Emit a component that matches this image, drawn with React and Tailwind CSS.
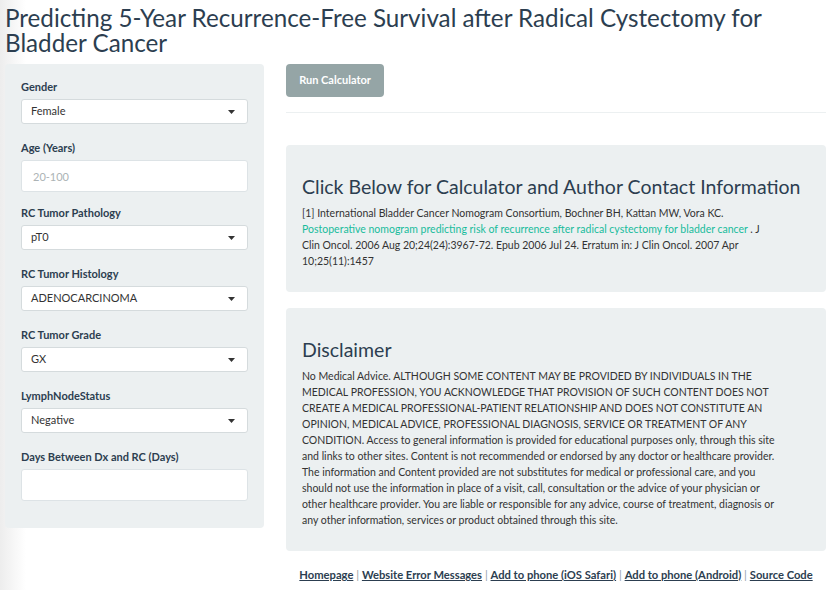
import { useState } from 'react'

const labelCls = 'block text-[11px] font-bold leading-4 text-[#2c3e50] mb-1'

function Caret() {
  return (
    <svg width="7" height="4" viewBox="0 0 7 4" className="shrink-0">
      <path d="M0 0h7L3.5 4z" fill="#333" />
    </svg>
  )
}

function SelectBox({ label, value, className = '' }) {
  return (
    <div className={className}>
      <label className={labelCls}>{label}</label>
      <div className="flex items-center justify-between h-[25px] bg-white border border-[#d5dbdd] rounded-[3px] pl-[9px] pr-[12px] text-[11px] text-[#333]">
        <span>{value}</span>
        <Caret />
      </div>
    </div>
  )
}

function TextBox({ label, placeholder, className = '' }) {
  const [val, setVal] = useState('')
  return (
    <div className={className}>
      <label className={labelCls}>{label}</label>
      <input
        className="block w-full h-[32px] bg-white border border-[#dde3e6] rounded-[3px] px-[11px] text-[11px] text-[#333] placeholder:text-[#acb3b5] outline-none"
        placeholder={placeholder}
        value={val}
        onChange={e => setVal(e.target.value)}
      />
    </div>
  )
}

export default function App() {
  return (
    <div className="min-h-[590px] px-[5px] bg-[linear-gradient(to_right,#ededed,#ffffff_26px)] font-['Lato','Open_Sans',sans-serif]">
      <h1 className="pt-[5px] pb-[9px] text-[24.2px] leading-[25px] text-[#2c3e50]">
        Predicting 5-Year Recurrence-Free Survival after Radical Cystectomy for Bladder Cancer
      </h1>

      <div className="flex gap-[22px] items-start">
        {/* sidebar inputs */}
        <div className="w-[259px] shrink-0 bg-[#ecf0f1] rounded-[4px] px-[16px] pt-[15px] pb-[27px]">
          <SelectBox label="Gender" value="Female" className="mb-[16px]" />
          <TextBox label="Age (Years)" placeholder="20-100" className="mb-[13px]" />
          <SelectBox label="RC Tumor Pathology" value="pT0" className="mb-[16px]" />
          <SelectBox label="RC Tumor Histology" value="ADENOCARCINOMA" className="mb-[16px]" />
          <SelectBox label="RC Tumor Grade" value="GX" className="mb-[16px]" />
          <SelectBox label="LymphNodeStatus" value="Negative" className="mb-[16px]" />
          <TextBox label="Days Between Dx and RC (Days)" placeholder="" />
        </div>

        {/* main */}
        <div className="flex-1 min-w-0">
          <button className="h-[33px] w-[98px] rounded-[4px] bg-[#95a5a6] text-white text-[11px] font-bold">
            Run Calculator
          </button>
          <hr className="mt-[15px] mb-[32px] border-0 border-t border-[#ecf0f1]" />

          <div className="bg-[#ecf0f1] rounded-[4px] px-[16px] pt-[31px] pb-[23px]">
            <h3 className="text-[19.5px] leading-[22px] text-[#2c3e50] mb-[7px]">
              Click Below for Calculator and Author Contact Information
            </h3>
            <p className="pr-[31px] text-[10.5px] leading-4 text-[#333]">
              [1] International Bladder Cancer Nomogram Consortium, Bochner BH, Kattan MW, Vora KC.{' '}
              <a href="#" className="text-[#18bc9c]">
                Postoperative nomogram predicting risk of recurrence after radical cystectomy for bladder cancer
              </a>{' '}
              . J Clin Oncol. 2006 Aug 20;24(24):3967-72. Epub 2006 Jul 24. Erratum in: J Clin Oncol. 2007 Apr 10;25(11):1457
            </p>
          </div>

          <div className="mt-[16px] bg-[#ecf0f1] rounded-[4px] px-[16px] pt-[31px] pb-[23px]">
            <h3 className="text-[19.5px] leading-[22px] text-[#2c3e50] mb-[7px]">Disclaimer</h3>
            <p className="pr-[31px] text-[10.5px] leading-4 text-[#333]">
              No Medical Advice. ALTHOUGH SOME CONTENT MAY BE PROVIDED BY INDIVIDUALS IN THE MEDICAL PROFESSION, YOU
              ACKNOWLEDGE THAT PROVISION OF SUCH CONTENT DOES NOT CREATE A MEDICAL PROFESSIONAL-PATIENT RELATIONSHIP AND
              DOES NOT CONSTITUTE AN OPINION, MEDICAL ADVICE, PROFESSIONAL DIAGNOSIS, SERVICE OR TREATMENT OF ANY
              CONDITION. Access to general information is provided for educational purposes only, through this site and
              links to other sites. Content is not recommended or endorsed by any doctor or healthcare provider. The
              information and Content provided are not substitutes for medical or professional care, and you should not
              use the information in place of a visit, call, consultation or the advice of your physician or other
              healthcare provider. You are liable or responsible for any advice, course of treatment, diagnosis or any
              other information, services or product obtained through this site.
            </p>
          </div>

          <div className="mt-[16px] text-center text-[11.2px] text-[#2c3e50]">
            <a href="#" className="underline font-bold">Homepage</a>
            <span className="text-[#95a5a6]"> | </span>
            <a href="#" className="underline font-bold">Website Error Messages</a>
            <span className="text-[#95a5a6]"> | </span>
            <a href="#" className="underline font-bold">Add to phone (iOS Safari)</a>
            <span className="text-[#95a5a6]"> | </span>
            <a href="#" className="underline font-bold">Add to phone (Android)</a>
            <span className="text-[#95a5a6]"> | </span>
            <a href="#" className="underline font-bold">Source Code</a>
          </div>
        </div>
      </div>
    </div>
  )
}
